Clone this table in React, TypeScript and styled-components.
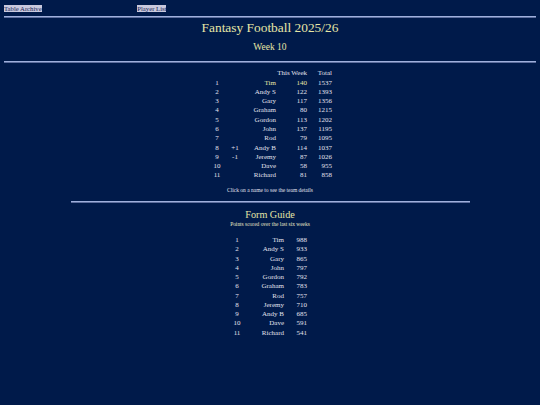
import React from "react";
import styled, { createGlobalStyle } from "styled-components";

const Global = createGlobalStyle`
  html, body { margin: 0; padding: 0; background: #001a4a; }
  body { font-family: "Liberation Serif", "Times New Roman", serif; }
`;

const Page = styled.div`
  min-height: 100vh;
  background: #001a4a;
  padding: 5px 4px 0;
  box-sizing: border-box;
  color: #e2e2ee;
  display: flex;
  flex-direction: column;
`;

const Nav = styled.nav`
  display: flex;
  align-items: flex-start;
  height: 7px;
  font-size: 6.7px;
  line-height: 7px;
`;

const NavCell = styled.div<{ $w?: number }>`
  display: flex;
  width: ${(p) => (p.$w ? `${p.$w}px` : "auto")};
  flex: none;
`;

const NavLink = styled.a`
  display: block;
  font-size: 6.7px;
  line-height: 7px;
  height: 7px;
  background: #c9c9de;
  color: #1a2656;
  text-decoration: none;
  white-space: nowrap;
`;

const Rule = styled.div<{ $top: number; $width?: string }>`
  margin-top: ${(p) => p.$top}px;
  width: ${(p) => p.$width ?? "100%"};
  align-self: center;
  height: 2px;
  border-top: 1px solid #9fb0dc;
  border-bottom: 1px solid #5d6e9e;
  box-sizing: border-box;
  flex: none;
`;

const Title = styled.h1`
  margin: 2.3px 0 0;
  font-size: 13.4px;
  line-height: 15.4px;
  font-weight: normal;
  color: #e6e6a6;
  text-align: center;
`;

const Week = styled.h2`
  margin: 6.6px 0 0;
  font-size: 9.5px;
  line-height: 10.9px;
  font-weight: normal;
  color: #e6e6a6;
  text-align: center;
`;

const Grid = styled.div<{ $cols: string; $top: number }>`
  margin-top: ${(p) => p.$top}px;
  align-self: center;
  display: grid;
  grid-template-columns: ${(p) => p.$cols};
  grid-auto-rows: 9.27px;
  font-size: 7px;
  line-height: 9.27px;
  color: #e2e2ee;
  white-space: nowrap;
`;

const Cell = styled.div<{ $align?: "left" | "center" | "right"; $hl?: boolean; $pr?: number }>`
  text-align: ${(p) => p.$align ?? "right"};
  color: ${(p) => (p.$hl ? "#e6e6a6" : "inherit")};
  padding-right: ${(p) => p.$pr ?? 0}px;
`;

const Note = styled.p`
  margin: 6.5px 0 0;
  font-size: 5.5px;
  line-height: 7px;
  text-align: center;
  color: #e2e2ee;
`;

const SectionTitle = styled.h3`
  margin: 6.1px 0 0;
  font-size: 10.2px;
  line-height: 11.7px;
  font-weight: normal;
  color: #e6e6a6;
  text-align: center;
`;

const SubNote = styled.p`
  margin: 0;
  font-size: 5.45px;
  line-height: 6.3px;
  text-align: center;
  color: #e6e6c6;
`;

const league = [
  { r: 1, c: "", n: "Tim", w: 140, t: 1537, hl: true },
  { r: 2, c: "", n: "Andy S", w: 122, t: 1393 },
  { r: 3, c: "", n: "Gary", w: 117, t: 1356 },
  { r: 4, c: "", n: "Graham", w: 80, t: 1215 },
  { r: 5, c: "", n: "Gordon", w: 113, t: 1202 },
  { r: 6, c: "", n: "John", w: 137, t: 1195 },
  { r: 7, c: "", n: "Rod", w: 79, t: 1095 },
  { r: 8, c: "+1", n: "Andy B", w: 114, t: 1037 },
  { r: 9, c: "-1", n: "Jeremy", w: 87, t: 1026 },
  { r: 10, c: "", n: "Dave", w: 58, t: 955 },
  { r: 11, c: "", n: "Richard", w: 81, t: 858 },
];

const form = [
  ["Tim", 988],
  ["Andy S", 933],
  ["Gary", 865],
  ["John", 797],
  ["Gordon", 792],
  ["Graham", 783],
  ["Rod", 757],
  ["Jeremy", 710],
  ["Andy B", 685],
  ["Dave", 591],
  ["Richard", 541],
] as const;

export default function App() {
  return (
    <>
      <Global />
      <Page>
        <Nav>
          <NavCell $w={133.3}>
            <NavLink href="#">Table Archive</NavLink>
          </NavCell>
          <NavCell>
            <NavLink href="#">Player List</NavLink>
          </NavCell>
        </Nav>
        <Rule $top={4} />
        <Title>Fantasy Football 2025/26</Title>
        <Week>Week 10</Week>
        <Rule $top={7.8} />
        <Grid $cols="18px 18px 32px 31px 25px" $top={6.4}>
          <Cell />
          <Cell />
          <Cell />
          <Cell>This Week</Cell>
          <Cell>Total</Cell>
          {league.map((row) => (
            <React.Fragment key={row.r}>
              <Cell $align="center">{row.r}</Cell>
              <Cell $align="center">{row.c}</Cell>
              <Cell $hl={row.hl}>{row.n}</Cell>
              <Cell $hl={row.hl}>{row.w}</Cell>
              <Cell>{row.t}</Cell>
            </React.Fragment>
          ))}
        </Grid>
        <Note>Click on a name to see the team details</Note>
        <Rule $top={6.8} $width="75%" />
        <SectionTitle>Form Guide</SectionTitle>
        <SubNote>Points scored over the last six weeks</SubNote>
        <Grid $cols="18px 38px 28px" $top={9}>
          {form.map(([n, p], i) => (
            <React.Fragment key={n}>
              <Cell $align="center">{i + 1}</Cell>
              <Cell>{n}</Cell>
              <Cell $pr={5}>{p}</Cell>
            </React.Fragment>
          ))}
        </Grid>
      </Page>
    </>
  );
}
